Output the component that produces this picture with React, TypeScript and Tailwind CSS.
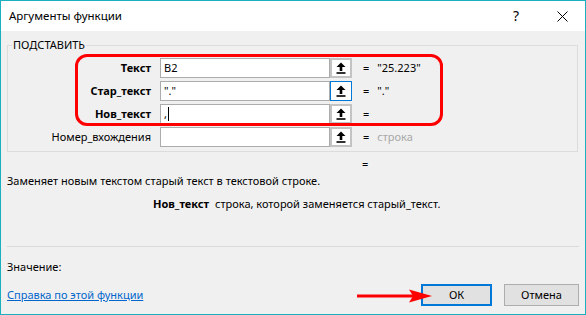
import React from 'react';

const font = { fontFamily: '"Noto Sans", "Liberation Sans", sans-serif' };

const PickIcon = () => (
  <svg width="10" height="12" viewBox="0 0 10 12">
    <path d="M5 0.5 L9.5 5 L6.3 5 L6.3 9 L3.7 9 L3.7 5 L0.5 5 Z" fill="#000" />
    <rect x="0.5" y="10.2" width="9" height="1.6" fill="#000" />
  </svg>
);

type Row = { label: string; bold: boolean; input: string; value: string; focus?: boolean; cursor?: boolean; muted?: boolean };

const rows: Row[] = [
  { label: 'Текст', bold: true, input: 'B2', value: '"25.223"' },
  { label: 'Стар_текст', bold: true, input: '"."', value: '"."', focus: true },
  { label: 'Нов_текст', bold: true, input: ',', value: '', cursor: true },
  { label: 'Номер_вхождения', bold: false, input: '', value: 'строка', muted: true },
];

export default function App() {
  return (
    <div
      className="relative w-[586px] h-[315px] overflow-hidden border border-[#1bb0bf] bg-[#f0f0f0] text-[11px] leading-[16px] text-black flex flex-col"
      style={font}>
      {/* title bar */}
      <div className="h-[30px] bg-white flex items-center pl-[8px] pr-[17px] shrink-0">
        <span className="text-[11.5px]">Аргументы функции</span>
        <span className="ml-auto text-[14px] mr-[38px]">?</span>
        <svg width="11" height="11" viewBox="0 0 11 11">
          <path d="M0.5 0.5 L10.5 10.5 M10.5 0.5 L0.5 10.5" stroke="#000" strokeWidth="1" />
        </svg>
      </div>

      {/* group box */}
      <fieldset className="mt-[6px] ml-[6px] w-[571px] border border-[#dcdcdc] pb-[4px]">
        <legend className="ml-[4px] px-[1px] leading-[16px]">ПОДСТАВИТЬ</legend>
        <div className="pt-[5px] flex flex-col gap-[3px]">
          {rows.map((r, idx) => (
            <div key={'row-' + idx} className="flex items-center h-[20px]">
              <div className={'w-[143px] text-right ' + (r.bold ? 'font-bold' : '')}>{r.label}</div>
              <div className="ml-[9px] w-[170px] h-[20px] bg-white border border-[#acacac] flex items-center pl-[3px]">
                {r.input}
                {r.cursor && <span className="w-px h-[14px] bg-black ml-[1px]" />}
              </div>
              <div
                className={
                  'w-[22px] h-[20px] bg-white flex items-center justify-center ' +
                  (r.focus ? 'border border-[#0078d7]' : 'border-2 border-[#c3c3c3]')
                }>
                <PickIcon />
              </div>
              <span className="ml-[11px]">=</span>
              <span className={'ml-[8px] ' + (r.muted ? 'text-[#a8a8a8]' : '')}>{r.value}</span>
            </div>
          ))}
        </div>
      </fieldset>

      <div className="mt-[4px] pl-[361px]">=</div>
      <div className="mt-[1px] pl-[6px]">Заменяет новым текстом старый текст в текстовой строке.</div>
      <div className="mt-[7px] pl-[152px] flex">
        <span className="font-bold w-[62px]">Нов_текст</span>
        <span>строка, которой заменяется старый_текст.</span>
      </div>

      <div className="mt-[34px] mx-[6px] h-px bg-[#dadada]" />
      <div className="mt-[12px] pl-[6px]">Значение:</div>

      <div className="mt-[9px] pl-[6px] pr-[6px] flex items-center">
        <span className="text-[#0066cc] underline">Справка по этой функции</span>
        <button className="ml-auto w-[71px] h-[22px] bg-[#e1e1e1] border-2 border-[#0078d7]">ОК</button>
        <button className="ml-[12px] w-[75px] h-[22px] bg-[#e1e1e1] border border-[#adadad]">Отмена</button>
      </div>

      {/* red annotations */}
      <div className="absolute left-[74px] top-[53px] w-[368px] h-[72px] border-[3px] border-[#ff0000] rounded-[12px]" />
      <svg className="absolute left-[356px] top-[287px]" width="76" height="16" viewBox="0 0 76 16">
        <path d="M0 8 L56 8" stroke="#ff0000" strokeWidth="3" />
        <path d="M52 1.5 L75 8 L52 14.5 L56 8 Z" fill="#ff0000" />
      </svg>
    </div>
  );
}
